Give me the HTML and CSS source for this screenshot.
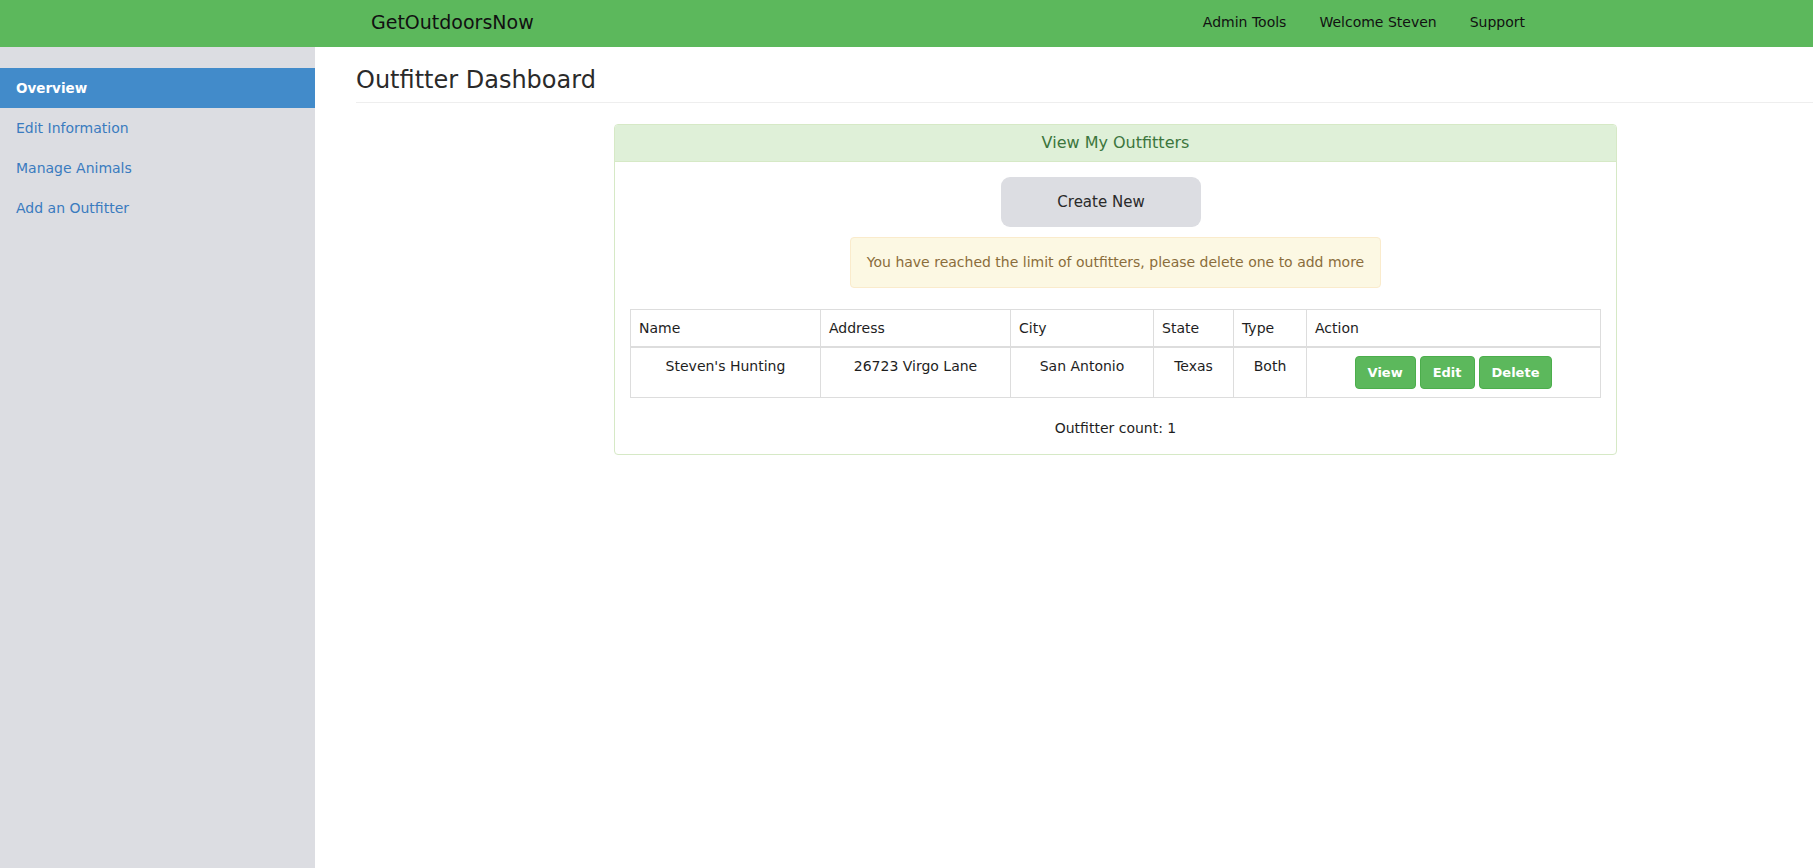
FILE: index.html
```html
<!DOCTYPE html>
<html lang="en">
<head>
<meta charset="utf-8">
<title>Outfitter Dashboard</title>
<link rel="stylesheet" href="styles.css">
</head>
<body>
<header class="navbar">
  <a class="brand" href="#">GetOutdoorsNow</a>
  <nav class="nav-links">
    <a href="#">Admin Tools</a>
    <a href="#">Welcome Steven</a>
    <a href="#">Support</a>
  </nav>
</header>
<div class="layout">
  <aside class="sidebar">
    <a class="side-item active" href="#">Overview</a>
    <a class="side-item" href="#">Edit Information</a>
    <a class="side-item" href="#">Manage Animals</a>
    <a class="side-item" href="#">Add an Outfitter</a>
  </aside>
  <main class="main">
    <h1 class="page-header">Outfitter Dashboard</h1>
    <section class="panel">
      <div class="panel-heading">View My Outfitters</div>
      <div class="panel-body">
        <button class="btn-create">Create New</button>
        <div class="alert">You have reached the limit of outfitters, please delete one to add more</div>
        <table class="table">
          <colgroup>
            <col class="c-name"><col class="c-addr"><col class="c-city"><col class="c-state"><col class="c-type"><col class="c-action">
          </colgroup>
          <thead>
            <tr><th>Name</th><th>Address</th><th>City</th><th>State</th><th>Type</th><th>Action</th></tr>
          </thead>
          <tbody>
            <tr>
              <td>Steven's Hunting</td>
              <td>26723 Virgo Lane</td>
              <td>San Antonio</td>
              <td>Texas</td>
              <td>Both</td>
              <td>
                <div class="actions">
                  <a class="btn-green" href="#">View</a>
                  <a class="btn-green" href="#">Edit</a>
                  <a class="btn-green" href="#">Delete</a>
                </div>
              </td>
            </tr>
          </tbody>
        </table>
        <p class="count">Outfitter count: 1</p>
      </div>
    </section>
  </main>
</div>
</body>
</html>
```
FILE: styles.css
```css
* { box-sizing: border-box; }
body {
  margin: 0;
  font-family: "DejaVu Sans", "Liberation Sans", sans-serif;
  font-size: 14px;
  line-height: 20px;
  color: #333;
  background: #fff;
}
a { text-decoration: none; }

.navbar {
  height: 47px;
  background: #5cb85c;
  display: flex;
  align-items: center;
  padding: 0 288px 3px 371px;
}
.brand {
  font-size: 19px;
  color: #111;
}
.nav-links {
  margin-left: auto;
  display: flex;
  gap: 33px;
}
.nav-links a {
  color: #111;
  font-size: 14px;
}

.layout {
  display: flex;
  min-height: calc(100vh - 47px);
}
.sidebar {
  width: 315px;
  flex: none;
  background: #dcdde2;
  padding-top: 21px;
  display: flex;
  flex-direction: column;
}
.side-item {
  height: 40px;
  line-height: 40px;
  padding-left: 16px;
  color: #3a7bbf;
  font-size: 14px;
}
.side-item.active {
  background: #428bca;
  color: #fff;
  font-weight: bold;
  font-size: 13.5px;
}

.main {
  flex: 1;
  padding-left: 41px;
}
.page-header {
  margin: 20px 0 21px;
  font-size: 24px;
  line-height: 26px;
  font-weight: normal;
  color: #2a2a2a;
  padding-bottom: 9px;
  border-bottom: 1px solid #eee;
}

.panel {
  margin-left: 258px;
  width: 1003px;
  border: 1px solid #d6e9c6;
  border-radius: 4px;
}
.panel-heading {
  background: #dff0d8;
  color: #3c763d;
  border-bottom: 1px solid #d6e9c6;
  text-align: center;
  font-size: 16px;
  padding: 9px 15px;
  line-height: 18px;
  border-radius: 3px 3px 0 0;
}
.panel-body {
  padding: 15px 15px 16px;
  display: flex;
  flex-direction: column;
}
.btn-create {
  align-self: flex-start;
  margin-left: 371px;
  width: 200px;
  height: 50px;
  border: none;
  border-radius: 9px;
  background: #dcdde2;
  color: #2a2a2a;
  font-family: inherit;
  font-size: 15px;
}
.alert {
  align-self: center;
  margin-top: 10px;
  padding: 15px 16px;
  line-height: 19px;
  background: #fcf8e3;
  border: 1px solid #faebcc;
  border-radius: 4px;
  color: #8a6d3b;
  font-size: 14px;
}

.table {
  margin-top: 21px;
  width: 970px;
  border-collapse: collapse;
  table-layout: fixed;
}
.c-name { width: 190px; }
.c-addr { width: 190px; }
.c-city { width: 143px; }
.c-state { width: 80px; }
.c-type { width: 73px; }
.c-action { width: 294px; }
.table th, .table td {
  border: 1px solid #ddd;
  padding: 8px;
  vertical-align: top;
  color: #1e1e1e;
}
.table th {
  text-align: left;
  font-weight: normal;
  border-bottom-width: 2px;
}
.table td { text-align: center; }
.actions {
  display: flex;
  justify-content: center;
  gap: 4px;
}
.btn-green {
  display: inline-block;
  padding: 6px 12px;
  line-height: 19px;
  font-size: 13px;
  font-weight: bold;
  color: #fff;
  background: #5cb85c;
  border: 1px solid #4cae4c;
  border-radius: 4px;
}
.count {
  margin: 20px 0 0;
  text-align: center;
  color: #1e1e1e;
}
```
